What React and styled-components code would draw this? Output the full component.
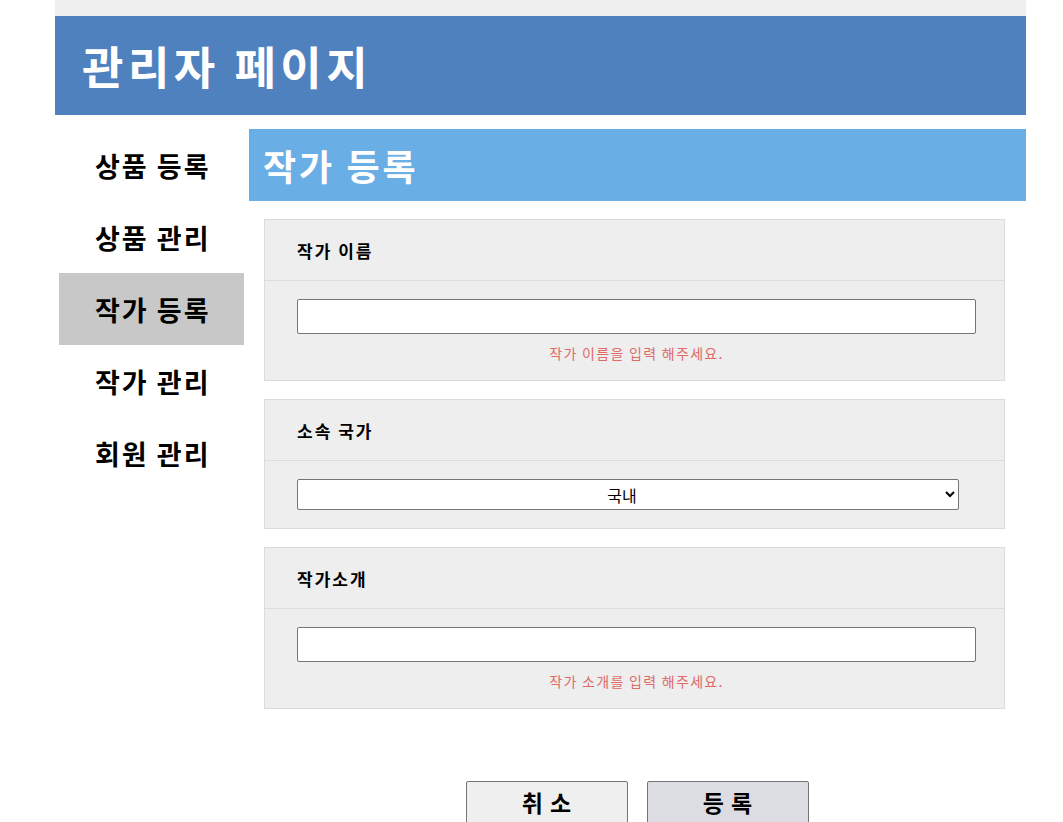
import React from 'react'
import styled, { createGlobalStyle } from 'styled-components'

const GlobalStyle = createGlobalStyle`
  body {
    margin: 0;
    font-family: "Noto Sans CJK KR", "Noto Sans", sans-serif;
    background: #fff;
  }
`

const Page = styled.div`
  width: 971px;
  margin-left: 55px;
`

const TopBar = styled.div`
  height: 16px;
  background: #efefef;
`

const Header = styled.header`
  height: 99px;
  background: #5081bf;
  display: flex;
  align-items: center;
  padding-left: 27px;
`

const PageTitle = styled.h1`
  margin: 0;
  color: #fff;
  font-size: 45px;
  font-weight: 700;
  letter-spacing: 4.5px;
`

const Body = styled.div`
  display: flex;
  gap: 5px;
  margin-top: 14px;
  padding-left: 4px;
`

const Sidebar = styled.nav`
  width: 185px;
  display: flex;
  flex-direction: column;
`

const NavItem = styled.div`
  height: 72px;
  display: flex;
  align-items: center;
  padding-left: 36px;
  font-size: 27px;
  font-weight: 700;
  letter-spacing: 2px;
  color: #000;
  background: ${props => (props.$active ? '#c8c8c8' : 'transparent')};
`

const Main = styled.main`
  flex: 1;
`

const SectionTitle = styled.h2`
  margin: 0;
  height: 72px;
  display: flex;
  align-items: center;
  padding-left: 14px;
  background: #6aaee6;
  color: #fff;
  font-size: 36px;
  font-weight: 700;
  letter-spacing: 3px;
`

const Form = styled.form`
  padding: 18px 21px 0 15px;
  display: flex;
  flex-direction: column;
  gap: 18px;
`

const Field = styled.div`
  background: #eeeeee;
  border: 1px solid #dcdcdc;
`

const FieldHead = styled.div`
  height: 60px;
  display: flex;
  align-items: center;
  padding-left: 32px;
  border-bottom: 1px solid #dcdcdc;
  font-size: 17px;
  font-weight: 700;
  letter-spacing: 2px;
`

const FieldBody = styled.div`
  padding: 18px 28px 18px 32px;
  display: flex;
  flex-direction: column;
  align-items: stretch;
`

const TextInput = styled.input`
  box-sizing: border-box;
  height: 35px;
  width: 100%;
  border: 1px solid #767676;
  border-radius: 2px;
  background: #fff;
  font-size: 16px;
`

const Select = styled.select`
  box-sizing: border-box;
  height: 31px;
  width: 662px;
  border: 1px solid #767676;
  border-radius: 2px;
  background: #fff;
  font-family: "Noto Sans CJK KR", sans-serif;
  font-size: 16px;
  text-align: center;
  text-align-last: center;
  color: #000;
`

const ErrorText = styled.p`
  margin: 10px 0 0;
  text-align: center;
  color: #e06a6a;
  font-size: 14px;
  letter-spacing: 1.3px;
  line-height: 18px;
`

const Buttons = styled.div`
  display: flex;
  justify-content: center;
  gap: 19px;
  margin-top: 72px;
`

const Button = styled.button`
  width: 162px;
  height: 46px;
  border: 1px solid #767676;
  border-radius: 2px;
  background: ${props => (props.$primary ? '#dcdde2' : '#efefef')};
  font-family: "Noto Sans CJK KR", sans-serif;
  font-size: 23px;
  font-weight: 700;
  letter-spacing: 7px;
  padding: 0 0 4px 6px;
  color: #000;
`

const menu = ['상품 등록', '상품 관리', '작가 등록', '작가 관리', '회원 관리']

const App = () => {
  return (
    <>
      <GlobalStyle />
      <Page>
        <TopBar />
        <Header>
          <PageTitle>관리자 페이지</PageTitle>
        </Header>
        <Body>
          <Sidebar>
            {menu.map((item, idx) => (
              <NavItem key={idx} $active={item === '작가 등록'}>{item}</NavItem>
            ))}
          </Sidebar>
          <Main>
            <SectionTitle>작가 등록</SectionTitle>
            <Form onSubmit={e => e.preventDefault()}>
              <Field>
                <FieldHead>작가 이름</FieldHead>
                <FieldBody>
                  <TextInput type="text" />
                  <ErrorText>작가 이름을 입력 해주세요.</ErrorText>
                </FieldBody>
              </Field>
              <Field>
                <FieldHead>소속 국가</FieldHead>
                <FieldBody>
                  <Select defaultValue="국내">
                    <option value="국내">국내</option>
                    <option value="해외">해외</option>
                  </Select>
                </FieldBody>
              </Field>
              <Field>
                <FieldHead>작가소개</FieldHead>
                <FieldBody>
                  <TextInput type="text" />
                  <ErrorText>작가 소개를 입력 해주세요.</ErrorText>
                </FieldBody>
              </Field>
            </Form>
            <Buttons>
              <Button type="button">취소</Button>
              <Button type="button" $primary>등록</Button>
            </Buttons>
          </Main>
        </Body>
      </Page>
    </>
  )
}

export default App
